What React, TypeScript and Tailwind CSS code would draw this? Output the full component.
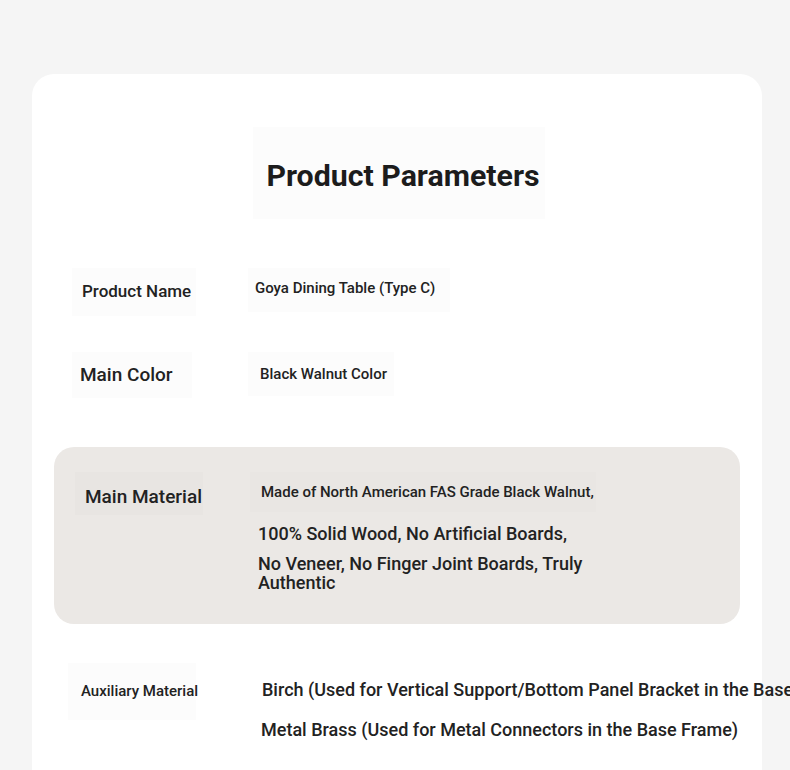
import React from 'react';

// Product parameter sheet
export default function App() {
  return (
    <div className="h-screen w-full overflow-hidden bg-[#f5f5f5] pl-8 pr-7 pt-[74px] font-['Roboto',sans-serif] text-[#222]">
      <div className="rounded-t-[22px] bg-white pb-16">
        <div className="flex justify-center pt-[53px]">
          <div className="ml-[4px] flex h-[92px] w-[292px] items-center justify-center bg-[#fcfcfc] pt-[5px] pl-[8px]">
            <h1 className="text-[30.3px] font-bold text-[#1c1c1c]">Product Parameters</h1>
          </div>
        </div>

        {/* Product Name */}
        <div className="mt-[49px] ml-10 flex items-start">
          <div className="flex h-[48px] w-[124px] shrink-0 items-center bg-[#fcfcfc] pl-[10px] text-[17px] font-medium">
            Product Name
          </div>
          <div className="ml-[52px] flex h-[44px] w-[202px] items-center bg-[#fcfcfc] pb-[3px] pl-[7px] text-[15px] font-medium">
            Goya Dining Table (Type C)
          </div>
        </div>

        {/* Main Color */}
        <div className="mt-[36px] ml-10 flex items-start">
          <div className="flex h-[46px] w-[120px] shrink-0 items-center bg-[#fcfcfc] pl-[8px] text-[19px] font-medium">
            Main Color
          </div>
          <div className="ml-[56px] flex h-[44px] w-[146px] items-center bg-[#fcfcfc] pl-[12px] text-[15px] font-medium">
            Black Walnut Color
          </div>
        </div>

        {/* Main Material */}
        <div className="mt-[49px] ml-[22px] h-[177px] w-[686px] rounded-[20px] bg-[#ebe8e5] pt-[25px] pl-[21px]">
          <div className="flex items-start">
            <div className="flex h-[43px] w-[128px] shrink-0 items-center bg-[#e8e5e2] pl-[10px] pt-[8px] text-[19px] font-medium">
              Main Material
            </div>
            <div className="ml-[47px] flex flex-col">
              <div className="flex h-[40px] w-[346px] items-center whitespace-nowrap bg-[#e9e6e3] pl-[11px] text-[15px] font-medium">
                Made of North American FAS Grade Black Walnut,
              </div>
              <div className="mt-[11px] pl-[8px] text-[18px] leading-[21px] font-medium">
                100% Solid Wood, No Artificial Boards,
              </div>
              <div className="mt-[10px] w-[345px] pl-[8px] text-[18px] leading-[19px] font-medium">
                No Veneer, No Finger Joint Boards, Truly Authentic
              </div>
            </div>
          </div>
        </div>

        {/* Auxiliary Material */}
        <div className="mt-[39px] ml-9 flex items-start">
          <div className="flex h-[57px] w-[128px] shrink-0 items-center whitespace-nowrap bg-[#fcfcfc] pl-[13px] text-[15px] font-medium">
            Auxiliary Material
          </div>
          <div className="ml-[66px] flex flex-col whitespace-nowrap text-[18px] font-medium">
            <div className="mt-[16px] leading-[21px]">
              Birch (Used for Vertical Support/Bottom Panel Bracket in the Base Frame)
            </div>
            <div className="mt-[19px] -ml-px leading-[21px]">
              Metal Brass (Used for Metal Connectors in the Base Frame)
            </div>
          </div>
        </div>
      </div>
    </div>
  );
}
